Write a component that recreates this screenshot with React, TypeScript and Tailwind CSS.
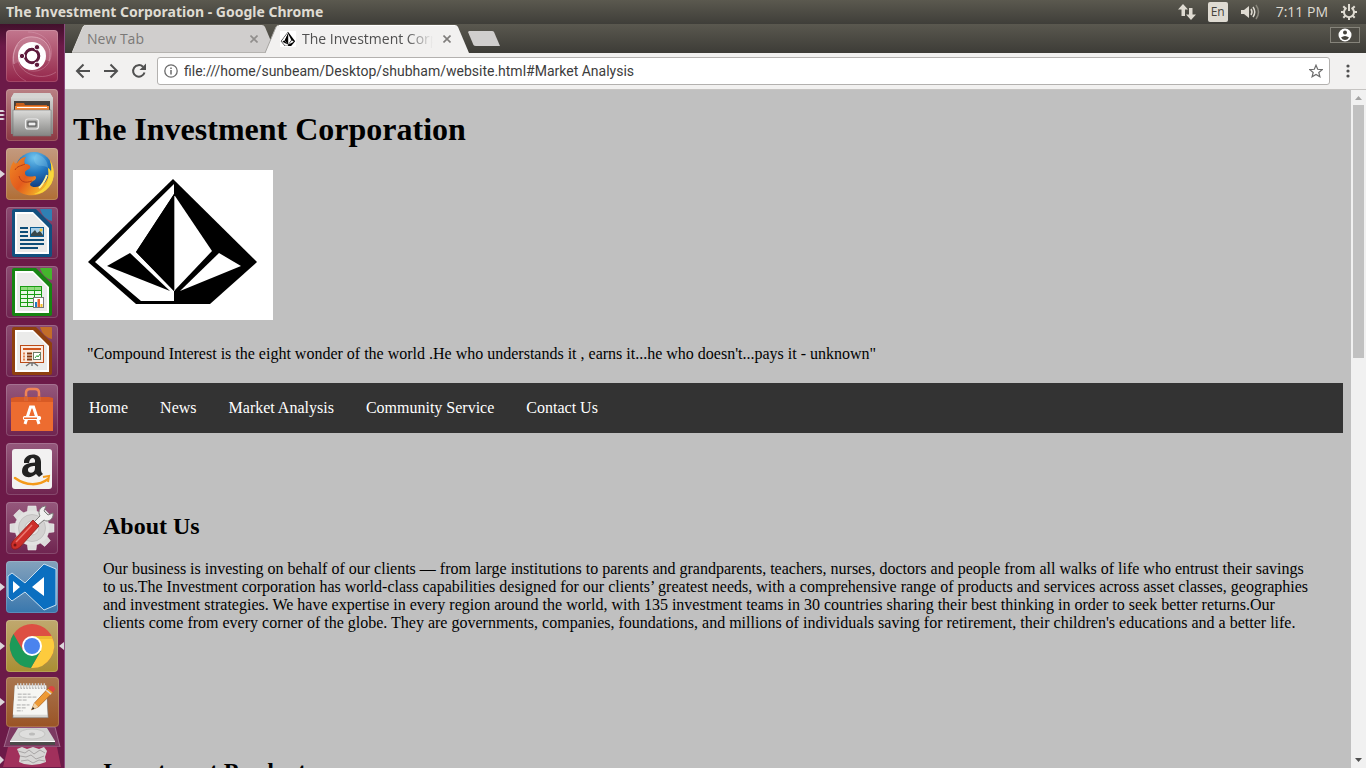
import React from "react";

type IconProps = { children: React.ReactNode; box?: string; className?: string };

function Svg({ children, box = "0 0 52 52", className = "block h-full w-full" }: IconProps) {
  return (
    <svg viewBox={box} className={className} aria-hidden="true">
      {children}
    </svg>
  );
}

function DiamondLogo({ className, title, crop = "0 0 200 150" }: { className: string; title?: string; crop?: string }) {
  return (
    <svg viewBox={crop} preserveAspectRatio="none" className={className} role={title ? "img" : undefined} aria-label={title} aria-hidden={title ? undefined : true}>
      <rect width="200" height="150" fill="#fff" />
      <path d="M100 9 L184 92 L137 134 H63 L15 92 Z" fill="#000" />
      <path d="M101 14 V24 L63 82 L101 121 V131 H68 L22 92 Z" fill="#fff" />
      <path d="M101 24 L63 82 L101 121 Z" fill="#000" />
      <path d="M102 26 L139 81 L102 120 Z" fill="#fff" />
      <path d="M101.500 26 V121" stroke="#aaa" strokeWidth="1" />
      <path d="M57 83 L97 121 L34 96 Z" fill="#000" />
      <path d="M146 83 L168 96 L107 121 Z" fill="#fff" />
    </svg>
  );
}

function UbuntuIcon() {
  return (
    <Svg>
      <g fill="none" stroke="#f3c9d6" strokeWidth="1">
        <path d="M8 34 C5 18 14 5 28 7 C40 8 47 19 43 31" opacity=".5" />
        <path d="M22 2 C40 2 49 17 44 30 C40 40 30 43 22 40" opacity=".25" />
        <path d="M50 42 C38 51 15 46 12 30" opacity=".3" />
        <path d="M20 51 C5 44 3 26 12 15" opacity=".25" />
      </g>
      <path d="M8 34 C5 18 14 5 28 7 C40 8 47 19 43 31 L26 26 Z" fill="#fff" opacity=".14" />
      <circle cx="26" cy="26" r="14" fill="#fff" />
      <circle cx="26" cy="26" r="6.800" fill="none" stroke="#5e1a3c" strokeWidth="3" />
      <g fill="#5e1a3c" stroke="#fff" strokeWidth="1">
        <circle cx="16" cy="26" r="2.700" />
        <circle cx="31" cy="17.200" r="2.700" />
        <circle cx="31" cy="34.800" r="2.700" />
      </g>
    </Svg>
  );
}

function FilesIcon() {
  return (
    <Svg>
      <defs>
        <linearGradient id="cab" x1="0" y1="0" x2="0" y2="1">
          <stop offset="0" stopColor="#dcdcda" />
          <stop offset="1" stopColor="#858583" />
        </linearGradient>
      </defs>
      <path d="M8 4 H44 L47 9 V45 H5 V9 Z" fill="url(#cab)" />
      <path d="M8 4 H44 L47 9 H5 Z" fill="#d5d5d3" />
      <rect x="8" y="12" width="36" height="12" fill="#45403c" />
      <path d="M10 14 H18 L19 16 H41 V24 H9 Z" fill="#c65f1c" />
      <path d="M9 17 H43 V23 H9 Z" fill="#f0883a" />
      <path d="M11 18.500 H41" stroke="#fff" strokeWidth="1.200" />
      <path d="M7 21 H45 V47 H7 Z" fill="url(#cab)" stroke="#777" strokeWidth=".6" />
      <rect x="19.500" y="30" width="13" height="10" rx="2.500" fill="#a9a9a7" stroke="#eee" strokeWidth="1.200" />
      <rect x="22" y="33" width="8" height="4" fill="#eee" stroke="#444" strokeWidth="1" />
    </Svg>
  );
}

function FirefoxIcon() {
  return (
    <Svg>
      <defs>
        <radialGradient id="globe" cx=".5" cy=".15" r=".8">
          <stop offset="0" stopColor="#6fc3ee" />
          <stop offset=".5" stopColor="#2378c0" />
          <stop offset="1" stopColor="#123a7c" />
        </radialGradient>
        <linearGradient id="fox" x1="0" y1="0" x2="1" y2=".6">
          <stop offset="0" stopColor="#f08a25" />
          <stop offset=".5" stopColor="#e35a1c" />
          <stop offset="1" stopColor="#f6c52c" />
        </linearGradient>
      </defs>
      <circle cx="28" cy="23" r="19" fill="url(#globe)" />
      <path d="M30 6 C37 7 42 13 42 20 C37 16 33 20 29 15 C27 12 28 9 30 6 Z" fill="#8fd0f0" opacity=".3" />
      <path d="M44 12 C50 22 49 35 40 42 C30 51 14 48 7 38 C2 30 3 19 8 13 C8 15 9 16 11 15 C13 12 16 9 20 9 C18 12 18 14 19 16 C23 16 25 18 24 20 C22 22 19 22 19 25 C19 29 24 29 29 28 C31 29 30 32 27 33 C20 37 27 41 34 38 C43 34 44 24 42 20 C44 21 45 23 45 25 C46 20 45 16 44 12 Z" fill="url(#fox)" />
      <path d="M44 12 C50 22 49 35 40 42 C36 45 32 46 28 46 C40 42 44 33 42 20 C44 21 45 23 45 25 C46 20 45 16 44 12 Z" fill="#f9d73b" />
      <path d="M41 27 C39 33 37 36 33 40" fill="none" stroke="#fff19a" strokeWidth="2" />
      <path d="M13 28 C15 35 20 35 26 33 M9 22 C11 18 15 18 19 16" fill="none" stroke="#b63b15" strokeWidth="1" />
    </Svg>
  );
}

function DocumentFrame({ dark, light, children }: { dark: string; light: string; children: React.ReactNode }) {
  return (
    <Svg>
      <path d="M8 2 H30 L46 18 V48 Q46 50 44 50 H8 Q6 50 6 48 V4 Q6 2 8 2 Z" fill={dark} />
      <path d="M9 5 H27 L43 21 V47 H9 Z" fill="#fff" />
      <path d="M11 7 H27 L41 21 V45 H11 Z" fill="#ebebea" />
      <path d="M34 2 H45 Q46 2 46 3 V14 Q37 12 34 2 Z" fill={light} />
      {children}
    </Svg>
  );
}

function WriterIcon() {
  return (
    <DocumentFrame dark="#12507f" light="#2f80b4">
      <path d="M14 21 H22 M14 25 H22 M14 29 H22 M14 33 H38 M14 37 H38 M14 41 H32" stroke="#0d4d78" strokeWidth="2" />
      <rect x="24.500" y="20.500" width="13" height="9" fill="#a8cfe8" stroke="#0d5c92" />
      <path d="M25 29 V27 L29 23 L31 26 L34 24 L37 28 V29 Z" fill="#38474a" />
      <circle cx="35" cy="23" r="1.500" fill="#f0c53a" />
    </DocumentFrame>
  );
}

function CalcIcon() {
  return (
    <DocumentFrame dark="#178412" light="#45b52d">
      <rect x="14" y="20" width="22" height="21" fill="#199c13" />
      <g fill="#e8f7e4">
        {[21, 25, 29, 33, 37].map((y) =>
          [15, 22, 29].map((x) => <rect key={`${x}-${y}`} x={x} y={y} width="6" height="3" />)
        )}
      </g>
      <path d="M15 21 H35 V24 H15 Z" fill="#7cd465" opacity=".8" />
      <rect x="27.500" y="31.500" width="10" height="10" fill="#fff" stroke="#777" />
      <rect x="29" y="36" width="2" height="5" fill="#1d7cc4" />
      <rect x="31.500" y="33" width="2.500" height="8" fill="#e9632b" />
      <rect x="34.500" y="38" width="2" height="3" fill="#f3bd23" />
    </DocumentFrame>
  );
}

function ImpressIcon() {
  return (
    <DocumentFrame dark="#8f400f" light="#c36d28">
      <rect x="14.500" y="20.500" width="23" height="17" fill="#fbeadf" stroke="#bb4b18" />
      <path d="M17 24 H35" stroke="#d0561e" strokeWidth="2" />
      <path d="M17 28.500 H19 M17 31.500 H19 M17 34.500 H19" stroke="#e38352" strokeWidth="2" />
      <path d="M21 28.500 H26 M21 31.500 H26 M21 34.500 H26" stroke="#863a12" strokeWidth="2" />
      <rect x="27.500" y="27.500" width="7" height="7" fill="#fff" stroke="#6d7d6a" />
      <path d="M29 33 L31 30.500 L32 32 L34 29" fill="none" stroke="#32a03a" />
      <path d="M20 41 L24 38 H28 L32 41 M26 38 V41" fill="none" stroke="#777" strokeWidth="1.500" />
    </DocumentFrame>
  );
}

function SoftwareIcon() {
  return (
    <Svg>
      <path d="M5 14 H47 V47 H5 Z" fill="#ed6c30" />
      <path d="M5 14 L10 13 H43 L47 14 V18 H5 Z" fill="#d85a25" />
      <path d="M20 17 V9 Q20 5 24 5 H29 Q33 5 33 9 V17" fill="none" stroke="#f08456" strokeWidth="2.500" />
      <path d="M20 17 V12 M33 17 V12" stroke="#b9461b" strokeWidth="1" />
      <path d="M19 40 L24.500 23 H27.500 L33 40" fill="none" stroke="#fff" strokeWidth="3" />
      <rect x="17" y="32" width="18" height="4" rx="1.500" fill="#fff" />
      <rect x="18" y="33.500" width="13" height="1.500" fill="#ed6c30" />
    </Svg>
  );
}

function AmazonIcon() {
  return (
    <Svg>
      <rect x="6" y="6" width="40" height="40" rx="3" fill="#f2f1f1" />
      <path d="M18 20 C17 10 35 8 35 19 V27 C35 29 36 30 37 31 L33 34 C32 33 31 32 30 31 C25 36 16 35 16 28 C16 21 23 20 29 19.500 C30 14 24 13 23 20 Z M29 23 C25 23 22 24 22 27 C22 31 29 31 29 25 Z" fill="#222" fillRule="evenodd" />
      <path d="M9 35 C20 43 33 43 42 36" fill="none" stroke="#f39a1b" strokeWidth="2.500" strokeLinecap="round" />
      <path d="M37 34 L43 33 L42 39" fill="none" stroke="#f39a1b" strokeWidth="2" />
    </Svg>
  );
}

function SettingsIcon() {
  return (
    <Svg>
      <g fill="#dcdcdb" stroke="#f1f1f1" strokeWidth=".5">
        {[0, 45, 90, 135, 180, 225, 270, 315].map((a) => (
          <path key={a} d="M22 4 H30 L31 12 H21 Z" transform={`rotate(${a} 26 26)`} />
        ))}
      </g>
      <circle cx="26" cy="26" r="17.500" fill="#e2e2e1" />
      <circle cx="26" cy="26" r="13.500" fill="#d3d2d1" stroke="#c3c2c1" strokeWidth="1" />
      <circle cx="26" cy="26" r="7" fill="#e5e4e3" stroke="#c3c2c1" />
      <path d="M28 20 L34 14 C31 9 35 4 40 4 L38 9 L42 13 L47 11 C48 17 42 21 38 18 L31 24 Z" fill="#f0f0ef" stroke="#7c7c7a" strokeWidth="1" />
      <path d="M27 18 L33 24 L14 45 Q9 49 6 46 Q4 42 7 39 Z" fill="#cd2f2a" stroke="#8e1a18" strokeWidth=".8" />
      <path d="M26 23 L10 40" stroke="#ec7770" strokeWidth="1.500" />
      <circle cx="9" cy="43" r="1.500" fill="#7a1513" />
    </Svg>
  );
}

function CodeIcon() {
  return (
    <Svg>
      <path d="M2 15 L6 12 L19 22 L38 3 L50 8 V44 L38 49 L19 31 L6 40 L2 36 Z" fill="#0b6fc0" stroke="#c8dff0" strokeWidth="1" />
      <path d="M7 20 L14 26 L7 32 Z M38 16 V35 L26 26 Z" fill="#fff" />
    </Svg>
  );
}

function ChromeIcon() {
  return (
    <Svg>
      <circle cx="26" cy="26" r="22" fill="#dd4f43" />
      <path d="M26 26 V16 H45.600 A22 22 0 0 1 24.900 48 L34.700 31 Z" fill="#fdcb3d" />
      <path d="M26 26 L34.700 31 L24.900 48 A22 22 0 0 1 7.500 14 L17.300 31 Z" fill="#1c9a59" />
      <path d="M26 16 H45.600 L46 19 H34 Z" fill="#c99a20" opacity=".35" />
      <circle cx="26" cy="26" r="10" fill="#fff" />
      <circle cx="26" cy="26" r="8" fill="#4a83ee" />
    </Svg>
  );
}

function EditorIcon() {
  return (
    <Svg box="0 0 54 50">
      <path d="M9 9 H41 L43 41 H7 Z" fill="#d8d7d3" stroke="#777" strokeWidth=".6" />
      <path d="M9 8 H41 L42 38 H7 Z" fill="#f6f6f3" />
      <path d="M12 6 V11 M15 6 V11 M18 6 V11 M21 6 V11 M24 6 V11 M27 6 V11 M30 6 V11 M33 6 V11 M36 6 V11 M39 6 V11" stroke="#cfcfcf" strokeWidth="1.500" />
      <path d="M12 11 H40" stroke="#777" strokeWidth="1" strokeDasharray="1 2" />
      <path d="M12 17 H25 M12 20 H32 M12 23 H22 M11 28 H24 M11 31 H20 M11 34 H17" stroke="#aaa" strokeWidth="1" strokeDasharray="4 1" />
      <path d="M29 26 L43 11 L48 15 L33 30 L26 33 Z" fill="#ee9a35" stroke="#a65a17" strokeWidth=".7" />
      <path d="M29 26 L33 30 L26 33 Z" fill="#f1d1a2" />
      <path d="M26 33 L27.500 30 L29 32 Z" fill="#222" />
      <path d="M43 11 L45 9 Q49 8 50 12 L48 15 Z" fill="#dc4541" />
      <path d="M41 13 L46 17" stroke="#ddd" strokeWidth="1.500" />
    </Svg>
  );
}

type LauncherItem = {
  name: string;
  tile: string;
  icon: React.ReactNode;
  mark?: "arrow" | "stack";
  active?: boolean;
};

const launcherItems: LauncherItem[] = [
  { name: "Search your computer", tile: "from-[#c2768e] to-[#93234a]", icon: <UbuntuIcon /> },
  { name: "Files", tile: "from-[#b98084] to-[#8b3742]", icon: <FilesIcon />, mark: "stack" },
  { name: "Firefox", tile: "from-[#c39a7f] to-[#b06e35]", icon: <FirefoxIcon />, mark: "arrow" },
  { name: "LibreOffice Writer", tile: "from-[#8a4a70] to-[#6f2450]", icon: <WriterIcon /> },
  { name: "LibreOffice Calc", tile: "from-[#8a4a70] to-[#6f2450]", icon: <CalcIcon /> },
  { name: "LibreOffice Impress", tile: "from-[#8a4a70] to-[#6f2450]", icon: <ImpressIcon /> },
  { name: "Ubuntu Software", tile: "from-[#95587c] to-[#6f2450]", icon: <SoftwareIcon /> },
  { name: "Amazon", tile: "from-[#95587c] to-[#6f2450]", icon: <AmazonIcon /> },
  { name: "System Settings", tile: "from-[#95587c] to-[#6f2450]", icon: <SettingsIcon /> },
  { name: "Visual Studio Code", tile: "from-[#84a2bc] to-[#3877ad]", icon: <CodeIcon />, mark: "arrow" },
  { name: "Google Chrome", tile: "from-[#c0a86e] to-[#a98f32]", icon: <ChromeIcon />, mark: "arrow", active: true },
];

function Mark({ kind }: { kind?: "arrow" | "stack" }) {
  return (
    <span className="flex w-[6px] shrink-0 items-center">
      {kind === "arrow" && (
        <Svg box="0 0 5 8" className="h-2 w-[5px]">
          <path d="M0 0 L5 4 L0 8 Z" fill="#dcd5da" />
        </Svg>
      )}
      {kind === "stack" && (
        <Svg box="0 0 5 12" className="h-3 w-[5px]">
          <path d="M0 1 H3 L5 2.500 L3 3 H0 Z M0 5 H3 L5 6 L3 7 H0 Z M0 9 H3 L5 10 L3 11 H0 Z" fill="#dcd5da" />
        </Svg>
      )}
    </span>
  );
}

function Launcher() {
  return (
    <nav aria-label="Launcher" className="flex w-[65px] shrink-0 flex-col overflow-hidden border-r border-[#8d4c80] bg-linear-to-b from-[#42102c] via-[#6c1a48] via-3% to-[#6c1a48] pt-1.5">
      <ul className="flex shrink-0 flex-col gap-[7px]">
        {launcherItems.map((item) => (
          <li key={item.name} className="flex h-[52px] items-center">
            <Mark kind={item.mark} />
            <button aria-label={item.name} className={`size-[52px] shrink-0 overflow-hidden rounded-[4px] bg-linear-to-b ${item.tile} shadow-[inset_0_0_0_1px_rgba(255,255,255,0.16)]`}>
              {item.icon}
            </button>
            {item.active && (
              <Svg box="0 0 5 8" className="ml-px h-2 w-[5px]">
                <path d="M5 0 L0 4 L5 8 Z" fill="#dcd5da" />
              </Svg>
            )}
          </li>
        ))}
      </ul>
      <div className="mt-[5px] flex h-[50px] shrink-0 items-center">
        <Mark kind="arrow" />
        <button aria-label="Text Editor" className="h-[50px] w-[53px] shrink-0 rounded-[4px] bg-linear-to-b from-[#a9764f] to-[#9a5425] shadow-[inset_0_0_0_1px_rgba(255,255,255,0.16)]">
          <EditorIcon />
        </button>
      </div>
      <button aria-label="Disk" className="block h-5 w-16 shrink-0">
        <Svg box="0 0 64 20">
          <path d="M10 0 H55 L60 20 H4 Z" fill="#7c3a62" stroke="#a36c8d" />
          <path d="M18 1 H47 L55 14 H10 Z" fill="#d2d2d1" />
          <ellipse cx="32" cy="7" rx="13" ry="5" fill="#dededd" stroke="#c4c4c2" />
          <ellipse cx="32" cy="7" rx="3" ry="1.500" fill="#bcbcbb" />
          <path d="M10 14 H55 V18 H10 Z" fill="#4b4b4a" />
          <path d="M10 14 H55 V15 H10 Z" fill="#fff" />
        </Svg>
      </button>
      <button aria-label="Trash" className="block h-[22px] w-16 shrink-0">
        <Svg box="0 0 64 22">
          <path d="M8 0 H57 L61 20 H3 Z" fill="#a1305c" />
          <path d="M17 2 L22 0 L27 2 L33 0 L39 2 L44 0 L47 4 L45 10 L46 15 L40 17 L32 18 L24 17 L19 15 L20 9 Z" fill="#d7d6d5" />
          <path d="M18 4 L25 6 L29 3 L34 7 L40 3 L45 6 M20 9 L26 10 L31 8 L36 12 L44 9 M21 14 L28 13 L33 16 L39 13 L45 14" fill="none" stroke="#a8a5a5" />
          <path d="M0 9 L4 13 L0 17 Z" fill="#dcd5da" />
        </Svg>
      </button>
    </nav>
  );
}

function SystemBar() {
  return (
    <header className="flex h-6 shrink-0 items-center justify-between bg-linear-to-b from-[#5b594f] to-[#3f3e39] pr-2 pl-1.5 text-[#dfdbd2]">
      <span className="font-['Noto_Sans',sans-serif] text-sm font-bold leading-6">The Investment Corporation - Google Chrome</span>
      <div className="flex items-center">
        <button aria-label="Network">
          <Svg box="0 0 18 16" className="h-4 w-[18px]">
            <path d="M5 0 L10 5.500 H7 V12 H3.500 V5.500 H0 Z M13 16 L8 10.500 H11 V4 H14.500 V10.500 H18 Z" fill="#dfdbd2" />
          </Svg>
        </button>
        <button className="ml-3 flex h-5 w-5 items-center justify-center rounded-[2px] bg-[#dfdbd2] text-xs leading-5 text-[#45433d]">En</button>
        <button aria-label="Volume" className="ml-3">
          <Svg box="0 0 20 16" className="h-4 w-5">
            <path d="M1 6 H4 L9 2 V14 L4 10 H1 Z" fill="#dfdbd2" />
            <path d="M11 5 Q13 8 11 11 M13 3 Q16.500 8 13 13" fill="none" stroke="#dfdbd2" strokeWidth="1.500" />
            <path d="M16 1 Q21 8 16 15" fill="none" stroke="#89867c" strokeWidth="1.500" />
          </Svg>
        </button>
        <button className="ml-4 text-sm leading-6 whitespace-nowrap">7:11 PM</button>
        <button aria-label="Session" className="ml-3">
          <Svg box="0 0 18 18" className="size-[18px]">
            <path d="M6.500 4.800 A5 5 0 1 0 11.500 4.800" fill="none" stroke="#dfdbd2" strokeWidth="2" />
            <path d="M9 1 V8" stroke="#dfdbd2" strokeWidth="2" />
            <path d="M1 9 H4 M14 9 H17 M9 14 V17 M3.300 3.300 L5.500 5.500 M14.700 3.300 L12.500 5.500 M3.300 14.700 L5.500 12.500 M14.700 14.700 L12.500 12.500" stroke="#dfdbd2" strokeWidth="2" />
          </Svg>
        </button>
      </div>
    </header>
  );
}

function CloseGlyph({ color }: { color: string }) {
  return (
    <Svg box="0 0 8 8" className="size-2">
      <path d="M0.500 0.500 L7.500 7.500 M7.500 0.500 L0.500 7.500" stroke={color} strokeWidth="1.600" />
    </Svg>
  );
}

function Tab({ active, label, icon }: { active?: boolean; label: string; icon?: React.ReactNode }) {
  return (
    <div className={`relative h-7 w-[204px] ${active ? "-ml-[11px]" : ""}`}>
      <svg viewBox="0 0 204 28" className="absolute inset-0 h-full w-full" aria-hidden="true">
        <path d="M0 28 L11 2 Q12 0 14 0 H190 Q192 0 193 2 L204 28 Z" fill={active ? "#f2f1f0" : "#d0cecd"} />
        <path d="M0 28 L11 2 Q12 0 14 0 H190" fill="none" stroke={active ? "#a6a4a1" : "#dddbd9"} strokeWidth="1" />
        {active ? <path d="M14 0.500 H190" stroke="#fff" /> : <path d="M0 27.500 H204" stroke="#b5b3b0" />}
      </svg>
      <div className="relative flex h-full items-center pr-[18px] pl-[15px]">
        <button className={`flex min-w-0 flex-1 items-center gap-1.5 text-left text-sm leading-7 ${active ? "text-[#505050]" : "text-[#7b7977]"}`}>
          {icon}
          <span className={`flex-1 overflow-hidden whitespace-nowrap ${active ? "mask-r-from-80% mask-r-to-100%" : ""}`}>{label}</span>
        </button>
        <button aria-label={`Close ${label}`} className="ml-2.5">
          <CloseGlyph color={active ? "#7f7d7b" : "#908e8c"} />
        </button>
      </div>
    </div>
  );
}

function TabStrip() {
  return (
    <div className="flex h-[29px] shrink-0 items-end bg-linear-to-b from-[#5a584f] to-[#3d3c37] pl-[7px]">
      <Tab label="New Tab" />
      <Tab active label="The Investment Corporation" icon={<DiamondLogo crop="6 2 188 140" className="h-4 w-4 shrink-0 bg-white" />} />
      <button aria-label="New tab" className="-ml-px self-center">
        <Svg box="0 0 32 15" className="h-[15px] w-8">
          <path d="M1 0 H24 Q25.500 0 26 1 L32 15 H8 Q6 15 5.500 14 L0 1 Z" fill="#d0cecd" />
        </Svg>
      </button>
      <button aria-label="Profile" className="mr-1.5 mb-2.5 ml-auto flex h-4 w-[30px] items-center justify-center border border-[#85837a] bg-[#4d4b44]">
        <Svg box="0 0 14 14" className="size-3.5">
          <circle cx="7" cy="7" r="6.500" fill="#fff" />
          <circle cx="7" cy="4.500" r="2" fill="#45433d" />
          <path d="M3 9.500 Q7 6.500 11 9.500 Q9.500 12 7 12 Q4.500 12 3 9.500 Z" fill="#45433d" />
        </Svg>
      </button>
    </div>
  );
}

function Toolbar() {
  return (
    <div className="flex h-[37px] shrink-0 items-center border-b border-[#c6c4c2] bg-[#f2f1f0] pr-4 pl-2.5">
      <button aria-label="Back">
        <Svg box="0 0 16 16" className="size-4">
          <path d="M15 8 H2.500 M8.500 1.500 L2 8 L8.500 14.500" fill="none" stroke="#505050" strokeWidth="2" />
        </Svg>
      </button>
      <button aria-label="Forward" className="ml-3">
        <Svg box="0 0 16 16" className="size-4">
          <path d="M1 8 H13.500 M7.500 1.500 L14 8 L7.500 14.500" fill="none" stroke="#505050" strokeWidth="2" />
        </Svg>
      </button>
      <button aria-label="Reload" className="ml-3">
        <Svg box="0 0 16 16" className="size-4">
          <path d="M13.500 9.500 A5.800 5.800 0 1 1 12 3.800" fill="none" stroke="#505050" strokeWidth="2" />
          <path d="M15 0.500 V7 H8.500 Z" fill="#505050" />
        </Svg>
      </button>
      <div className="ml-2.5 flex h-7 flex-1 items-center rounded-[3px] border border-[#b3b1af] bg-white px-1.5">
        <Svg box="0 0 14 14" className="size-3.5 shrink-0">
          <circle cx="7" cy="7" r="6.200" fill="none" stroke="#6b6b6b" strokeWidth="1.300" />
          <path d="M7 6 V10.500 M7 3.500 V5" stroke="#6b6b6b" strokeWidth="1.500" />
        </Svg>
        <input
          aria-label="Address"
          className="ml-1.5 min-w-0 flex-1 bg-transparent font-[Roboto,sans-serif] text-sm text-[#3c3c3c] outline-none"
          defaultValue="file:///home/sunbeam/Desktop/shubham/website.html#Market Analysis"
        />
        <button aria-label="Bookmark this page">
          <Svg box="0 0 14 14" className="size-3.5">
            <path d="M7 1.200 L8.700 5.300 L13.200 5.600 L9.800 8.500 L10.900 12.800 L7 10.500 L3.100 12.800 L4.200 8.500 L0.800 5.600 L5.300 5.300 Z" fill="none" stroke="#6b6b6b" strokeWidth="1.200" />
          </Svg>
        </button>
      </div>
      <button aria-label="Menu" className="ml-4">
        <Svg box="0 0 4 14" className="h-3.5 w-1">
          <circle cx="2" cy="2" r="1.600" fill="#505050" />
          <circle cx="2" cy="7" r="1.600" fill="#505050" />
          <circle cx="2" cy="12" r="1.600" fill="#505050" />
        </Svg>
      </button>
    </div>
  );
}

const siteLinks = [
  ["Home", "#Home"],
  ["News", "#News"],
  ["Market Analysis", "#Market Analysis"],
  ["Community Service", "#Community Service"],
  ["Contact Us", "#Contact Us"],
];

function WebPage() {
  return (
    <main className="min-w-0 flex-1 overflow-hidden bg-[#c0c0c0] px-2 pt-[21px] font-['Liberation_Serif',serif] text-base leading-[18px] text-black">
      <h1 className="text-[32px] leading-[37px] font-bold">The Investment Corporation</h1>
      <DiamondLogo className="mt-[22px] block h-[150px] w-[200px]" title="The Investment Corporation logo" />
      <p className="mt-[25px] ml-3.5">
        "Compound Interest is the eight wonder of the world .He who understands it , earns it...he who doesn't...pays it - unknown"
      </p>
      <ul className="mt-5 flex bg-[#333]">
        {siteLinks.map(([label, href]) => (
          <li key={label}>
            <a href={href} className="block p-4 text-white">{label}</a>
          </li>
        ))}
      </ul>
      <section className="px-[30px] pt-20">
        <h2 className="text-2xl leading-[27px] font-bold">About Us</h2>
        <p className="mt-5">
          Our business is investing on behalf of our clients — from large institutions to parents and grandparents, teachers, nurses, doctors and people from all walks of life who entrust their savings to us.The Investment corporation has world-class capabilities designed for our clients’ greatest needs, with a comprehensive range of products and services across asset classes, geographies and investment strategies. We have expertise in every region around the world, with 135 investment teams in 30 countries sharing their best thinking in order to seek better returns.Our clients come from every corner of the globe. They are governments, companies, foundations, and millions of individuals saving for retirement, their children's educations and a better life.
        </p>
      </section>
      <section className="px-[30px] pt-[126px]">
        <h2 className="text-2xl leading-[27px] font-bold">Investment Products</h2>
      </section>
    </main>
  );
}

function ScrollBar() {
  return (
    <div className="flex w-[15px] shrink-0 flex-col items-center bg-[#f1f1f1]">
      <Svg box="0 0 15 15" className="size-[15px] shrink-0">
        <path d="M4 10 L7.500 6 L11 10 Z" fill="#a3a3a3" />
      </Svg>
      <div className="h-[253px] w-[11px] bg-[#c1c1c1]" />
      <Svg box="0 0 15 15" className="mt-auto size-[15px] shrink-0">
        <path d="M4 5 H11 L7.500 9 Z" fill="#505050" />
      </Svg>
    </div>
  );
}

export default function App() {
  return (
    <div className="flex h-screen flex-col overflow-hidden font-['Open_Sans','Noto_Sans',sans-serif]">
      <SystemBar />
      <div className="flex min-h-0 flex-1">
        <Launcher />
        <div className="flex min-w-0 flex-1 flex-col">
          <TabStrip />
          <Toolbar />
          <div className="flex min-h-0 flex-1">
            <WebPage />
            <ScrollBar />
          </div>
        </div>
      </div>
    </div>
  );
}
